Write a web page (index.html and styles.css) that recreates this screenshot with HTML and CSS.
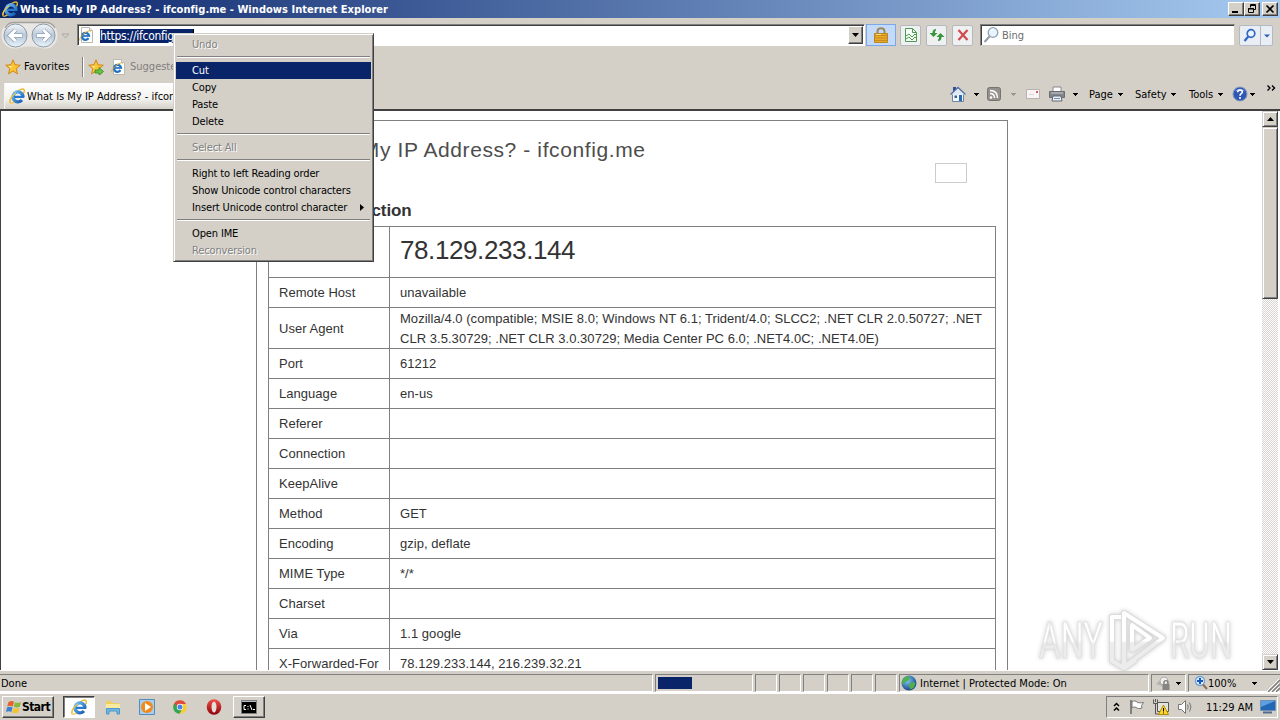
FILE: index.html
```html
<!DOCTYPE html>
<html lang="en">
<head>
    <meta charset="UTF-8">
    <meta name="viewport" content="width=device-width, initial-scale=1.0">
    <title>What Is My IP Address? - ifconfig.me - Windows Internet Explorer</title>
    <link rel="stylesheet" href="styles.css">
</head>
<body>
    <!-- Shared icons -->
    <svg class="defs" width="0" height="0">
        <defs>
            <linearGradient id="gBlue" x1="0" y1="0" x2="1" y2="1">
                <stop offset="0" stop-color="#6fc0f5"/>
                <stop offset="1" stop-color="#1558b0"/>
            </linearGradient>
            <linearGradient id="gNav" x1="0" y1="0" x2="0" y2="1">
                <stop offset="0" stop-color="#f4f7fa"/>
                <stop offset="0.5" stop-color="#b9c8da"/>
                <stop offset="1" stop-color="#e9f6fd"/>
            </linearGradient>
            <radialGradient id="gGlobe" cx="0.4" cy="0.35" r="0.7">
                <stop offset="0" stop-color="#7fc8f0"/>
                <stop offset="1" stop-color="#123f86"/>
            </radialGradient>
            <linearGradient id="gRed" x1="0" y1="0" x2="0" y2="1">
                <stop offset="0" stop-color="#f0504a"/>
                <stop offset="1" stop-color="#8d0008"/>
            </linearGradient>
            <linearGradient id="gMark" x1="0" y1="0" x2="0" y2="1">
                <stop offset="0.5" stop-color="#fff"/>
                <stop offset="0.55" stop-color="#ececec"/>
            </linearGradient>
        </defs>
        <symbol id="ie" viewBox="0 0 16 16">
            <path d="M1.300 15C-.3 13 2.500 8 7 4.400C10.500 1.500 14 .3 15 1.600c.7 1 .2 2.500-.6 3.900" fill="none" stroke="#e9b92c" stroke-width="1.400"/>
            <path d="M14 8.800A5 5 0 1 0 12.900 12" fill="none" stroke="url(#gBlue)" stroke-width="3.300"/>
            <path d="M5 8.900h10.300" stroke="#2a78cc" stroke-width="2.300"/>
            <path d="M1.300 15c1 .6 2.600 0 4-1M1 14C.5 11.500 3.500 7.500 7 4.600" fill="none" stroke="#f0c640" stroke-width="1.200"/>
        </symbol>
        <symbol id="iepage" viewBox="0 0 16 16">
            <path d="M2.500.5h8l3 3v12h-11z" fill="#fff" stroke="#bbb8b0"/>
            <path d="M10.500.5v3h3" fill="#e8e8e8" stroke="#bbb8b0"/>
            <path d="M10 9A3.500 3.500 0 1 0 9.500 11.200" fill="none" stroke="#2171c4" stroke-width="2.300"/>
            <path d="M4 9h7.100" stroke="#2171c4" stroke-width="1.700"/>
            <path d="M.9 13.500C0 11.500 3 8 6 5.800c3-2 5.300-2.500 5.500-1.300" fill="none" stroke="#e0b030"/>
        </symbol>
        <symbol id="star" viewBox="0 0 16 16">
            <path d="M8 .8l2 5 5.300.4-4.100 3.400 1.300 5.300L8 12l-4.500 2.900 1.300-5.300L.7 6.200 6 5.800z" fill="#fbc536" stroke="#d2871b"/>
            <path d="M8 3.500L6.700 7l-3.200.2L6 9.300z" fill="#fff0a0"/>
        </symbol>
        <symbol id="down" viewBox="0 0 5 3">
            <path d="M0 0h5v1H4v1H3v1H2V2H1V1H0z" fill="currentColor"/>
        </symbol>
    </svg>

    <div class="titlebar">
        <svg class="i16"><use href="#ie"/></svg>
        <span class="title">What Is My IP Address? - ifconfig.me - Windows Internet Explorer</span>
        <div class="winbtns">
            <div class="winbtn"><svg width="12" height="10"><path d="M2 7h6v2H2z"/></svg></div>
            <div class="winbtn"><svg width="12" height="10"><path d="M4.500 3.500v-3h5v5h-2M4 1.500h6M2.500 8.500v-4h5v4zM2 5h6" fill="none" stroke="#000"/></svg></div>
            <div class="winbtn close"><svg width="12" height="10"><path d="M2.500 1.500l7 7m0-7l-7 7" stroke="#000" stroke-width="1.700"/></svg></div>
        </div>
    </div>

    <div class="navbar">
        <svg class="arrows" width="74" height="30" viewBox="0 0 74 30">
            <path d="M12 3h34c8 0 11.500 5 11.500 12.500S52 28.500 46 28.500c-7 0-8-2-16.500-2s-9 2-15 2C7 28.500 1.500 23 1.500 15.500S5 3 12 3z" fill="#e9e7e4"/>
            <path d="M5 8Q8 2.500 14 2.500h32q6 0 9 5.500" fill="none" stroke="#a5a29d" stroke-width="1.500"/>
            <circle cx="15.500" cy="15.500" r="11.500" fill="url(#gNav)" stroke="#8d98a6"/>
            <circle cx="43.500" cy="15.500" r="11.500" fill="url(#gNav)" stroke="#8d98a6"/>
            <path d="M22.500 15.500H10m5.500-5.500L10 15.500l5.500 5.500" fill="none" stroke="#8fa0b4" stroke-width="4.500"/>
            <path d="M22 15.500H10m5.500-5.500L10 15.500l5.500 5.500" fill="none" stroke="#fff" stroke-width="3"/>
            <path d="M36.500 15.500H49m-5.500-5.500l5.500 5.500-5.500 5.500" fill="none" stroke="#8fa0b4" stroke-width="4.500"/>
            <path d="M37 15.500h12m-5.500-5.500l5.500 5.500-5.500 5.500" fill="none" stroke="#fff" stroke-width="3"/>
            <path d="M62 14h7l-3.500 4z" fill="#d4d0c8" stroke="#aeaba4"/>
        </svg>
        <div class="address">
            <svg class="i16"><use href="#iepage"/></svg>
            <span class="url">https://ifconfig.me/</span>
            <div class="dropbtn"><svg width="7" height="4"><path d="M0 0h7L3.500 4z"/></svg></div>
        </div>
        <div class="lock">
            <svg width="16" height="18" viewBox="0 0 16 18">
                <path d="M4.500 9V5.500C4.500 1 11.500 1 11.500 5.500V9" fill="none" stroke="#9a8a5c" stroke-width="2"/>
                <path d="M1.500 7.500h13v9h-13z" fill="#e9a92a" stroke="#b98522"/>
                <path d="M2 9.500h12M2 12h12M2 14.500h12" stroke="#c98d1a"/>
                <path d="M3 8.500h5" stroke="#ffe28a"/>
            </svg>
        </div>
        <div class="tool">
            <svg width="16" height="16"><path d="M2.500 1.500h7l4 4v9h-11z" fill="#f5fff5" stroke="#4f9a51"/><path d="M9.500 1.500v4h4M3 9l3-2 3 3 3-3 2 2M3 12l3-2 3 3 3-3 2 2" fill="none" stroke="#4f9a51"/></svg>
        </div>
        <div class="tool">
            <svg width="16" height="16"><path d="M7 2C5 2 3.500 3 3.500 6H.5l4 4 4-4H6c0-2 .5-2.500 1-2.500zM9 14c2 0 3.500-1 3.500-4h3l-4-4-4 4H10c0 2-.5 2.500-1 2.500z" fill="#37963b"/></svg>
        </div>
        <div class="tool">
            <svg width="16" height="16"><path d="M3.500 3l9 10m0-10l-9 10" stroke="#d24c4c" stroke-width="2.200"/></svg>
        </div>
        <div class="search">
            <svg width="16" height="18" viewBox="0 0 16 18"><circle cx="10" cy="6.500" r="4.800" fill="#e8f3fb" stroke="#8ba0b5" stroke-width="1.300"/><path d="M6.500 10.500L1.500 16" stroke="#929ba5" stroke-width="2"/><path d="M8 5q1-2 3-2" fill="none" stroke="#fff"/></svg>
            <span>Bing</span>
        </div>
        <div class="gobtn">
            <svg width="20" height="19"><circle cx="11" cy="7.500" r="3.800" fill="#e9f4ff" stroke="#3168c8" stroke-width="1.700"/><path d="M8.300 10.500L4.500 15" stroke="#3168c8" stroke-width="2.200"/></svg>
            <svg class="godrop" width="12" height="19"><path d="M3 8.500h6l-3 3z" fill="#2d5fb8"/></svg>
        </div>
    </div>

    <div class="favbar">
        <svg class="i16"><use href="#star"/></svg>
        <span class="favlabel">Favorites</span>
        <div class="sep"></div>
        <svg class="i16"><use href="#star"/><path d="M7 11h4V8.500l4.500 4-4.500 4V14H7z" fill="#68c247" stroke="#358a25" stroke-width=".8"/></svg>
        <svg class="i16 sug"><use href="#iepage"/></svg>
        <span class="suggest">Suggested Sites</span>
    </div>

    <div class="cmdbar">
        <div class="tab">
            <svg class="i16"><use href="#ie"/></svg>
            <span>What Is My IP Address? - ifconfig.me</span>
        </div>
        <div class="cmds">
            <svg class="home" width="16" height="16"><path d="M2.500 8v7.500h11V8" fill="#f1f5fa" stroke="#6f86a8"/><path d="M3 1h3v4H3z" fill="#354d94"/><path d="M.5 8.500L8 1.500l7.500 7" fill="#dfe8f4" stroke="#52709f" stroke-width="1.300"/><path d="M9 9h3v6H9z" fill="#286cae"/><path d="M4.500 9.500h2.500v2.500H4.500z" fill="#3d5c91"/></svg>
            <svg class="dn d1"><use href="#down"/></svg>
            <svg class="rss" width="14" height="14"><rect x=".5" y=".5" width="13" height="13" rx="2" fill="#94918c" stroke="#77746f"/><circle cx="4" cy="10.500" r="1.300" fill="#fff"/><path d="M3 6.500c3 0 4.500 2 4.500 4.500M3 3.500c5 0 7.500 3 7.500 7.500" fill="none" stroke="#fff" stroke-width="1.500"/></svg>
            <svg class="dn d2"><use href="#down"/></svg>
            <svg class="mail" width="14" height="10"><path d="M.5.5h13v9H.5z" fill="#f8f5f4" stroke="#b7b2b0"/><path d="M10 2h2v2h-2z" fill="#d05a62"/><path d="M3 5.500h5" stroke="#d6d6e0"/></svg>
            <svg class="print" width="16" height="16"><path d="M4 1h8v5H4z" fill="#fff" stroke="#85898f"/><path d="M.5 5.500h15v6H.5z" fill="#82868c" stroke="#6a6e74"/><path d="M2 7h12" stroke="#c9ccd0"/><path d="M4 10h8l1 5H3z" fill="#e9f2fa" stroke="#62676e"/><path d="M5 12.500h6" stroke="#6e8fb0"/></svg>
            <svg class="dn d3"><use href="#down"/></svg>
            <span class="page">Page</span><svg class="dn"><use href="#down"/></svg>
            <span class="safety">Safety</span><svg class="dn"><use href="#down"/></svg>
            <span class="tools">Tools</span><svg class="dn"><use href="#down"/></svg>
            <svg class="help" width="16" height="16"><circle cx="8" cy="8" r="7" fill="#2c57b5" stroke="#8496bc"/><path d="M3 5.500a5.500 4.500 0 0 1 10 0q-5-2-10 0" fill="#86a6e4"/><path d="M5.700 6.300c0-3 4.600-2.800 4.600-.2 0 1.600-2.300 1.700-2.300 3.600" fill="none" stroke="#fff" stroke-width="1.600"/><circle cx="8" cy="12" r="1.100" fill="#fff"/></svg>
            <svg class="dn d4"><use href="#down"/></svg>
            <svg class="more" width="9" height="6"><path d="M.5.5L3 3 .5 5.500M5 .5L7.500 3 5 5.500" fill="none" stroke="#000" stroke-width="1.400"/></svg>
        </div>
    </div>

    <div class="viewport">
        <div class="pagearea">
            <div class="container">
                <div class="header">
                    <h1>What Is My IP Address? - ifconfig.me</h1>
                    <div class="like"></div>
                </div>
                <h2>Your Connection</h2>
                <table class="info">
                    <tr class="ip"><td>IP Address</td><td><strong>78.129.233.144</strong></td></tr>
                    <tr><td>Remote Host</td><td>unavailable</td></tr>
                    <tr class="agent"><td>User Agent</td><td>Mozilla/4.0 (compatible; MSIE 8.0; Windows NT 6.1; Trident/4.0; SLCC2; .NET CLR 2.0.50727; .NET<br>CLR 3.5.30729; .NET CLR 3.0.30729; Media Center PC 6.0; .NET4.0C; .NET4.0E)</td></tr>
                    <tr><td>Port</td><td>61212</td></tr>
                    <tr><td>Language</td><td>en-us</td></tr>
                    <tr><td>Referer</td><td></td></tr>
                    <tr><td>Connection</td><td></td></tr>
                    <tr><td>KeepAlive</td><td></td></tr>
                    <tr><td>Method</td><td>GET</td></tr>
                    <tr><td>Encoding</td><td>gzip, deflate</td></tr>
                    <tr><td>MIME Type</td><td>*/*</td></tr>
                    <tr><td>Charset</td><td></td></tr>
                    <tr><td>Via</td><td>1.1 google</td></tr>
                    <tr><td>X-Forwarded-For</td><td>78.129.233.144, 216.239.32.21</td></tr>
                </table>
            </div>
        </div>
        <div class="scrollbar">
            <div class="sbtn"><svg width="7" height="4"><path d="M0 4h7L3.500 0z"/></svg></div>
            <div class="thumb"></div>
            <div class="sbtn last"><svg width="7" height="4"><path d="M0 0h7L3.500 4z"/></svg></div>
        </div>
    </div>

    <div class="statusbar">
        <div class="cell done">Done</div>
        <div class="cell progress"><div class="bar"></div></div>
        <div class="cell small"></div>
        <div class="cell small"></div>
        <div class="cell small"></div>
        <div class="cell small"></div>
        <div class="cell small"></div>
        <div class="cell small"></div>
        <div class="cell zone">
            <svg class="i16"><circle cx="8" cy="8" r="7.500" fill="url(#gGlobe)"/><path d="M3 3c3-2.500 5-1.500 6 0L7 6 4 7 2 10C.5 7 1 5 3 3zM9 8l4-1 1.500 2-2 4-3 1.500L8 11z" fill="#4fb04c"/></svg>
            <span>Internet | Protected Mode: On</span>
        </div>
        <div class="cell privacy">
            <svg class="i16"><path d="M1 9l7-6 3 4-4 4z" fill="#b5b2ad"/><circle cx="9" cy="6" r="4" fill="#eee" stroke="#b3b0ac"/><path d="M9 9V7.500c0-2.500 4-2.500 4 0V9" fill="none" stroke="#777" stroke-width="1.300"/><path d="M7.500 9h7v6h-7z" fill="#858585"/></svg>
            <svg class="dn"><use href="#down"/></svg>
        </div>
        <div class="cell zoom">
            <svg width="14" height="16"><circle cx="6" cy="6" r="4.500" fill="#d9edff" stroke="#6f9fd4" stroke-width="1.300"/><path d="M6 3v6M3 6h6" stroke="#1857b8" stroke-width="2"/><path d="M9 9.500l4 4.500" stroke="#8a6f5a" stroke-width="2"/></svg>
            <span>100%</span>
            <svg class="dn"><use href="#down"/></svg>
            <svg class="grip" width="13" height="13"><path d="M1 13L13 1M5 13l8-8M9 13l4-4" stroke="#808080" stroke-width="1.500"/><path d="M0 12L12 0M4 12l8-8M8 12l4-4" stroke="#fff"/></svg>
        </div>
    </div>

    <div class="taskbar">
        <div class="start">
            <svg width="16" height="16"><path d="M2.500 3C5 1.500 6.500 2 8 2.800L6.800 7.500C5 6.500 3.500 6.500 1.200 7.500z" fill="#e8602c"/><path d="M9 3.200c2 1 4 .8 6-.2L13.800 7.800c-2 1-4 .9-6 0z" fill="#84b93c"/><path d="M1 8.500c2-1 4-.8 5.600 0L5.300 13C3.500 12 2 12.200 0 13z" fill="#3c7fd0"/><path d="M7.500 8.900c2 1 4 .8 6 0l-1.200 4.500c-2 1-4 .9-6 0z" fill="#f6c22e"/></svg>
            <span>Start</span>
        </div>
        <div class="task active"><svg class="i16"><use href="#ie"/></svg></div>
        <svg class="i16 q1"><path d="M1 2h5l1 2h7v4H1z" fill="#f0cd5f"/><path d="M1 5h14v6H1z" fill="#fbe9a0"/><path d="M1.500 9.500h13V15H12v-3H4v3H1.500z" fill="#6db8e4" stroke="#4c96c7"/></svg>
        <svg class="i16 q2"><path d="M.5.5h15v15H.5z" fill="#a9cdec" stroke="#528dc2"/><circle cx="8" cy="8" r="6" fill="#f08a1c"/><path d="M6 4l6 4-6 4z" fill="#fff"/></svg>
        <svg class="i16 q3"><circle cx="8" cy="8" r="6.800" fill="#fbcb2f"/><path d="M8 8L2.100 4.600A6.800 6.800 0 0 0 7.500 14.800L10.500 9.500z" fill="#33a557"/><path d="M8 5h6A6.800 6.800 0 0 0 2.100 4.600L5.500 8z" fill="#df4a3e"/><circle cx="8" cy="8" r="3.200" fill="#fff"/><circle cx="8" cy="8" r="2.500" fill="#4a86e0"/></svg>
        <svg class="i16 q4"><ellipse cx="8" cy="8" rx="7.300" ry="7.700" fill="url(#gRed)"/><ellipse cx="8" cy="8" rx="2.500" ry="5.600" fill="#e6dfd8"/></svg>
        <div class="task cmd"><svg width="16" height="14"><path d="M.5.5h15v13H.5z" fill="#000" stroke="#7d7d7d"/><path d="M1 1.500h14" stroke="#b8bcc8"/><path d="M5 5.500H3v4h2M7 6v1M7 8.500v1M9 5l2 5M12 9.500h2" fill="none" stroke="#fff"/></svg></div>
        <div class="tray">
            <svg class="chev" width="7" height="10"><path d="M1 4l2.500-2.500L6 4M1 8.500L3.500 6 6 8.500" fill="none" stroke="#000" stroke-width="1.500"/></svg>
            <svg class="i16 t1"><path d="M2 1v14" stroke="#666" stroke-width="1.500"/><path d="M3 2.500c2-1 4-.5 5 .5s3 1 6.500.5l-2 3 .5 2.500c-3 1-4.500.5-6-.5S4 8 3 9z" fill="#fff" stroke="#777"/></svg>
            <svg class="i16 t2"><path d="M4.500 3.500h11v9h-11z" fill="#e5e3de" stroke="#555"/><path d="M.5.5v4h4v-4M2.500 0v3M2.500 5v10H6" fill="none" stroke="#555"/><path d="M10.500 6l5 9.500h-10z" fill="#ffd629" stroke="#b28d08"/><path d="M10.500 9v3.500M10.500 13.500v1" stroke="#000"/></svg>
            <svg class="i16 t3"><path d="M1.500 5.500h3l4-4v13l-4-4h-3z" fill="#fff" stroke="#777"/><path d="M10.500 5.500q1.500 2.500 0 5M12.500 3.500q3 4.500 0 9" fill="none" stroke="#777"/></svg>
            <span>11:29 AM</span>
            <svg class="mon" width="16" height="14"><path d="M.5.500h15v10H.5z" fill="#2467b5" stroke="#6e90b5"/><path d="M1 1h14L1 7z" fill="#5aa0e2"/><path d="M3 12.500h9" stroke="#516c8d" stroke-width="2"/></svg>
        </div>
    </div>

    <div class="menu">
        <div class="item off">Undo</div>
        <div class="line"></div>
        <div class="item hot">Cut</div>
        <div class="item">Copy</div>
        <div class="item">Paste</div>
        <div class="item">Delete</div>
        <div class="line"></div>
        <div class="item off">Select All</div>
        <div class="line"></div>
        <div class="item">Right to left Reading order</div>
        <div class="item">Show Unicode control characters</div>
        <div class="item">Insert Unicode control character<svg width="4" height="7"><path d="M0 0l4 3.500L0 7z"/></svg></div>
        <div class="line"></div>
        <div class="item">Open IME</div>
        <div class="item off">Reconversion</div>
    </div>

    <svg class="watermark" width="200" height="64" viewBox="0 0 200 64">
        <text x="3" y="50" textLength="64" lengthAdjust="spacingAndGlyphs">ANY</text>
        <path d="M88 5l39 25-39 29zM96 17v25l18-12zM85 9H76v44l12 7 12-8" fill="none" stroke="#dcdcdc" stroke-width="6" stroke-linejoin="round"/>
        <path d="M88 5l39 25-39 29zM96 17v25l18-12zM85 9H76v44l12 7 12-8" fill="none" stroke="url(#gMark)" stroke-width="4" stroke-linejoin="round"/>
        <text x="134" y="50" textLength="62" lengthAdjust="spacingAndGlyphs">RUN</text>
    </svg>
</body>
</html>
```
FILE: styles.css
```css
* {
    box-sizing: border-box;
}
body {
    margin: 0;
    width: 1280px;
    height: 720px;
    overflow: hidden;
    position: relative;
    display: flex;
    flex-direction: column;
    background: #d4d0c8;
    color: #000;
    font-family: "DejaVu Sans Condensed", "DejaVu Sans", sans-serif;
    font-stretch: condensed;
    font-size: 11px;
    letter-spacing: 0;
    white-space: nowrap;
}
svg {
    display: block;
    flex: none;
}
.defs {
    position: absolute;
}
.i16 {
    width: 16px;
    height: 16px;
}
.dn {
    width: 5px;
    height: 3px;
}

/* Title bar */
.titlebar {
    height: 18px;
    flex: none;
    display: flex;
    align-items: center;
    padding: 0 2px;
    background: linear-gradient(to right, #0a246a, #a6caf0);
}
.title {
    margin-left: 2px;
    color: #fff;
    font-weight: bold;
    letter-spacing: 0.04px;
}
.winbtns {
    margin-left: auto;
    display: flex;
}
.winbtn {
    width: 16px;
    height: 14px;
    padding: 1px;
    background: #d4d0c8;
    border: 1px solid;
    border-color: #fff #404040 #404040 #fff;
    box-shadow: inset -1px -1px #808080;
}
.winbtn.close {
    margin-left: 2px;
}

/* Address row */
.navbar {
    height: 34px;
    flex: none;
    display: flex;
    align-items: center;
}
.arrows {
    margin-right: 3px;
}
.address {
    width: 788px;
    height: 22px;
    display: flex;
    align-items: center;
    background: #fff;
    border: 1px solid;
    border-color: #808080 #fff #fff #808080;
    box-shadow: inset 1px 1px #404040;
    padding-left: 1px;
}
.url {
    margin: 1px 0 0 5px;
    width: 94px;
    height: 14px;
    line-height: 15px;
    background: #0a246a;
    color: #fff;
    font-size: 12px;
    letter-spacing: -0.3px;
    border-right: 1px solid #000;
}
.dropbtn {
    width: 15px;
    height: 18px;
    margin-left: auto;
    margin-right: 1px;
    display: flex;
    align-items: center;
    justify-content: center;
    background: #d4d0c8;
    border: 1px solid;
    border-color: #fff #404040 #404040 #fff;
    box-shadow: inset -1px -1px #808080;
}
.lock {
    width: 30px;
    height: 22px;
    margin: 0 4px 0 1px;
    display: flex;
    align-items: center;
    justify-content: center;
    background: #c3dafa;
    border: 1px solid #7ca6e8;
}
.tool {
    width: 21px;
    height: 21px;
    margin-right: 5px;
    display: flex;
    align-items: center;
    justify-content: center;
    background: #eef0f2;
    border: 1px solid #b5b8bd;
    border-radius: 2px;
}
.search {
    width: 255px;
    height: 22px;
    margin-left: 2px;
    padding-left: 2px;
    display: flex;
    align-items: center;
    gap: 3px;
    background: #fff;
    color: #6d6d6d;
    border: 1px solid;
    border-color: #808080 #d4d0c8 #d4d0c8 #808080;
    box-shadow: inset 1px 1px #404040;
}
.gobtn {
    margin-left: 4px;
    height: 21px;
    display: flex;
    background: #e9edf4;
    border: 1px solid #b3bac6;
    border-radius: 2px;
}
.godrop {
    border-left: 1px solid #b3bac6;
}

/* Favorites bar */
.favbar {
    height: 29px;
    flex: none;
    display: flex;
    align-items: center;
    padding-left: 5px;
}
.favlabel {
    width: 58px;
    margin-left: 3px;
    letter-spacing: 0.1px;
}
.sep {
    width: 2px;
    height: 20px;
    margin-right: 4px;
    background: #fff;
    border-left: 1px solid #808080;
}
.sug {
    margin-left: 7px;
}
.suggest {
    margin-left: 3px;
    color: #808080;
}

/* Tab and command bar */
.cmdbar {
    height: 28px;
    flex: none;
    display: flex;
}
.tab {
    width: 192px;
    height: 26px;
    margin: 2px 0 0 4px;
    padding-left: 4px;
    display: flex;
    align-items: center;
    gap: 2px;
    background: linear-gradient(#fff, #f3f2ef 60%, #d4d0c8);
    border-left: 1px solid #f5f4f2;
    overflow: hidden;
}
.cmds {
    margin-left: auto;
    display: flex;
    align-items: center;
    padding-right: 4px;
    padding-bottom: 2px;
}
.d1 {
    margin: 0 8px;
}
.d2 {
    margin: 0 10px;
    color: #98958f;
}
.print {
    margin-left: 9px;
}
.d3 {
    margin: 0 11px 0 8px;
}
.page {
    width: 29px;
}
.safety {
    width: 36px;
    margin-left: 12px;
}
.tools {
    width: 29px;
    margin-left: 13px;
}
.help {
    margin-left: 9px;
}
.d4 {
    margin: 0 12px 0 2px;
}
.more {
    margin-bottom: 12px;
}

/* Page area */
.viewport {
    height: 561px;
    flex: none;
    display: flex;
    border-top: 2px solid #404040;
    border-left: 1px solid #404040;
    background: #fff;
    font-family: "Liberation Sans", Arial, sans-serif;
    font-stretch: normal;
}
.pagearea {
    width: 1261px;
    height: 559px;
    overflow: hidden;
    padding: 9px 0 0 255px;
}
.container {
    width: 752px;
    height: 600px;
    padding: 0 11px;
    border: 1px solid #808080;
    color: #333;
}
.header {
    height: 79px;
    display: flex;
    justify-content: space-between;
    align-items: flex-start;
}
h1 {
    margin: 17px 0 0 12px;
    font-size: 21px;
    line-height: 24px;
    font-weight: normal;
    letter-spacing: 0.6px;
    color: #4d4d4d;
}
.like {
    width: 32px;
    height: 20px;
    margin: 42px 29px 0 0;
    border: 1px solid #ccc;
}
h2 {
    height: 26px;
    margin: 0;
    padding-left: 10px;
    font-size: 17px;
    line-height: 22px;
    letter-spacing: -0.15px;
}
.info {
    width: 728px;
    table-layout: fixed;
    border-collapse: collapse;
    font-size: 13px;
    line-height: 20px;
    letter-spacing: 0.04px;
}
.info td {
    height: 30px;
    padding: 0 0 0 10px;
    border: 1px solid #808080;
}
.info td:first-child {
    width: 121px;
}
.info .ip td {
    height: 51px;
}
.info .agent td {
    height: 41px;
}
.info .agent td {
    padding-top: 1px;
    line-height: 19.500px;
}
.info strong {
    font-size: 26px;
    font-weight: normal;
    letter-spacing: -0.4px;
}

/* Scrollbar */
.scrollbar {
    width: 16px;
    height: 559px;
    display: flex;
    flex-direction: column;
    background: repeating-conic-gradient(#fff 0 25%, #d8d4cd 0 50%) 0 0 / 2px 2px;
}
.sbtn,
.thumb {
    background: #d4d0c8;
    border: 1px solid;
    border-color: #d4d0c8 #404040 #404040 #d4d0c8;
    box-shadow: inset 1px 1px #fff, inset -1px -1px #808080;
}
.sbtn {
    height: 16px;
    display: flex;
    align-items: center;
    justify-content: center;
}
.thumb {
    height: 172px;
}
.sbtn.last {
    margin-top: auto;
}

/* Status bar */
.statusbar {
    height: 24px;
    flex: none;
    display: flex;
    padding-top: 3px;
    border-top: 1px solid #fff;
    border-bottom: 2px solid #fff;
}
.cell {
    height: 18px;
    display: flex;
    align-items: center;
    border: 1px solid;
    border-color: #808080 #fff #fff #808080;
}
.done {
    width: 653px;
    margin-right: 2px;
    border-left: none;
    padding-left: 1px;
}
.progress {
    width: 98px;
    margin-right: 2px;
    padding-left: 2px;
}
.bar {
    width: 34px;
    height: 12px;
    background: #0a246a;
}
.small {
    width: 22px;
    margin-right: 2px;
}
.zone {
    width: 250px;
    padding-left: 1px;
    margin-right: 2px;
    gap: 3px;
}
.privacy {
    width: 35px;
    margin-right: 2px;
    padding-left: 3px;
    gap: 5px;
}
.zoom {
    flex: 1;
    padding-left: 5px;
    border-right: none;
}
.zoom span {
    width: 44px;
}
.grip {
    margin: 4px 0 0 auto;
}

/* Taskbar */
.taskbar {
    height: 26px;
    flex: none;
    display: flex;
    align-items: center;
    padding-left: 2px;
}
.start,
.task {
    height: 22px;
    display: flex;
    align-items: center;
    justify-content: center;
    border: 1px solid;
    border-color: #fff #404040 #404040 #fff;
    box-shadow: inset -1px -1px #808080;
}
.start {
    width: 52px;
    font-weight: bold;
    font-size: 12px;
    letter-spacing: -0.5px;
}
.task {
    width: 32px;
}
.task.active {
    margin-left: 9px;
    background: #fff;
    border-color: #404040 #fff #fff #404040;
    box-shadow: inset 1px 1px #808080;
}
.q1 {
    margin-left: 10px;
}
.q2 {
    margin-left: 18px;
}
.q3 {
    margin-left: 17px;
}
.q4 {
    margin-left: 18px;
}
.cmd {
    margin-left: 11px;
}
.tray {
    width: 172px;
    height: 22px;
    margin-left: auto;
    margin-right: 2px;
    display: flex;
    align-items: center;
    padding-left: 6px;
    border: 1px solid;
    border-color: #808080 #fff #fff #808080;
}
.t1 {
    margin-left: 9px;
}
.t2,
.t3 {
    margin-left: 8px;
}
.tray span {
    margin-left: 13px;
    width: 54px;
}

/* Context menu */
.menu {
    position: absolute;
    left: 173px;
    top: 33px;
    width: 201px;
    height: 229px;
    padding: 2px 1px 1px;
    background: #d4d0c8;
    border: 1px solid;
    border-color: #d4d0c8 #404040 #404040 #d4d0c8;
    box-shadow: inset 1px 1px #fff, inset -1px -1px #808080;
    letter-spacing: -0.14px;
}
.item {
    height: 17px;
    line-height: 16px;
    margin: 0 1px;
    padding: 0 7px 0 16px;
    display: flex;
    align-items: center;
    justify-content: space-between;
}
.hot {
    background: #0a246a;
    color: #fff;
}
.off {
    color: #808080;
    text-shadow: 1px 1px #fff;
}
.line {
    height: 2px;
    margin: 3px 2px 4px;
    border-top: 1px solid #808080;
    border-bottom: 1px solid #fff;
}

/* Watermark */
.watermark {
    position: absolute;
    left: 1036px;
    top: 608px;
    font-family: "Roboto", sans-serif;
    font-stretch: normal;
    font-size: 50px;
    filter: drop-shadow(0 0 2px #ccc);
}
.watermark text {
    fill: url(#gMark);
    stroke: #e2e2e2;
    stroke-width: 1px;
}
```
